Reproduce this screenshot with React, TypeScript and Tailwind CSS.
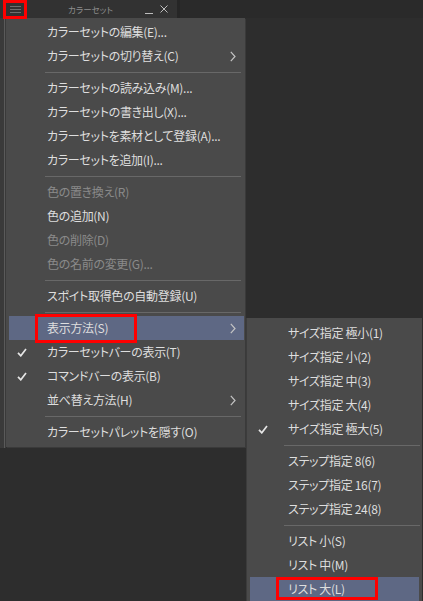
import React from "react";

type Item =
  | { sep: true }
  | {
      sep?: false;
      label: string;
      disabled?: boolean;
      checked?: boolean;
      sub?: boolean;
      active?: boolean;
    };

const mainItems: Item[] = [
  { label: "カラーセットの編集(E)..." },
  { label: "カラーセットの切り替え(C)", sub: true },
  { sep: true },
  { label: "カラーセットの読み込み(M)..." },
  { label: "カラーセットの書き出し(X)..." },
  { label: "カラーセットを素材として登録(A)..." },
  { label: "カラーセットを追加(I)..." },
  { sep: true },
  { label: "色の置き換え(R)", disabled: true },
  { label: "色の追加(N)" },
  { label: "色の削除(D)", disabled: true },
  { label: "色の名前の変更(G)...", disabled: true },
  { sep: true },
  { label: "スポイト取得色の自動登録(U)" },
  { sep: true },
  { label: "表示方法(S)", sub: true, active: true },
  { label: "カラーセットバーの表示(T)", checked: true },
  { label: "コマンドバーの表示(B)", checked: true },
  { label: "並べ替え方法(H)", sub: true },
  { sep: true },
  { label: "カラーセットパレットを隠す(O)" },
];

const subItems: Item[] = [
  { label: "サイズ指定 極小(1)" },
  { label: "サイズ指定 小(2)" },
  { label: "サイズ指定 中(3)" },
  { label: "サイズ指定 大(4)" },
  { label: "サイズ指定 極大(5)", checked: true },
  { sep: true },
  { label: "ステップ指定 8(6)" },
  { label: "ステップ指定 16(7)" },
  { label: "ステップ指定 24(8)" },
  { sep: true },
  { label: "リスト 小(S)" },
  { label: "リスト 中(M)" },
  { label: "リスト 大(L)", active: true },
];

function Check() {
  return (
    <svg width="10" height="9" viewBox="0 0 10 9" className="shrink-0">
      <path d="M1 4.8 L3.8 7.8 L9 1" fill="none" stroke="#e6e6e6" strokeWidth="1.7" />
    </svg>
  );
}

function Chevron() {
  return (
    <svg width="6" height="11" viewBox="0 0 6 11" className="shrink-0">
      <polyline points="0.8,0.8 5,5.5 0.8,10.2" fill="none" stroke="#c4c4c4" strokeWidth="1.2" />
    </svg>
  );
}

function MenuList({
  items,
  sepClass,
  rowClass,
}: {
  items: Item[];
  sepClass: string;
  rowClass: string;
}) {
  return (
    <>
      {items.map((it, i) =>
        it.sep ? (
          <div key={i} className={`h-[8px] flex items-center ${sepClass}`}>
            <div className="h-px w-full bg-[#686868]" />
          </div>
        ) : (
          <div
            key={i}
            className={`h-[24px] flex items-center ${rowClass} ${
              it.active ? "bg-[#5e6884]" : ""
            }`}
          >
            <div className="w-[38px] pl-[8px] shrink-0 flex items-center">
              {it.checked ? <Check /> : null}
            </div>
            <span
              className={`flex-1 whitespace-nowrap text-[12px] leading-none tracking-[-0.3px] [font-feature-settings:'palt'] ${
                it.disabled ? "text-[#8a8a8a]" : "text-[#dedede]"
              }`}
            >
              {it.label}
            </span>
            <div className="w-[14px] shrink-0 flex items-center">
              {it.sub ? <Chevron /> : null}
            </div>
          </div>
        )
      )}
    </>
  );
}

export default function App() {
  return (
    <div className="relative w-[423px] h-[601px] overflow-hidden bg-[#2d2d2d] font-['Noto_Sans_CJK_JP','Noto_Sans',sans-serif]">
      {/* Header */}
      <div className="flex h-[18px]">
        <div className="w-[177px] bg-[#323232] flex items-center">
          <div className="w-[30px] flex flex-col items-center gap-[2px] pl-[1px]">
            <div className="h-px w-[11px] bg-[#6e6e6e]" />
            <div className="h-px w-[11px] bg-[#6e6e6e]" />
            <div className="h-px w-[11px] bg-[#6e6e6e]" />
          </div>
          <div className="flex-1 flex justify-center pl-[6px]">
            <span className="text-[8.5px] leading-none text-[#8e8e8e] [font-feature-settings:'palt']">
              カラーセット
            </span>
          </div>
          <div className="flex items-center gap-[7px] pr-[9px]">
            <div className="h-px w-[8px] bg-[#bdbdbd] mt-[8px]" />
            <svg width="8" height="8" viewBox="0 0 8 8">
              <path d="M0.5 0.5 L7.5 7.5 M7.5 0.5 L0.5 7.5" stroke="#bdbdbd" strokeWidth="1" />
            </svg>
          </div>
        </div>
        <div className="w-[3px] bg-[#262626]" />
        <div className="flex-1 bg-[#2a2a2a]" />
      </div>

      {/* underlying panel strip */}
      <div className="flex h-[430px]">
        <div className="w-[6px] bg-[#3a3a3a] flex">
          <div className="w-[4px]" />
          <div className="w-px bg-[#5a5a5a]" />
        </div>
      </div>

      {/* Main menu */}
      <div className="absolute left-[6px] top-[18px] w-[239px] bg-[#4a4a4a] pt-[2px] pb-[3px] shadow-[1px_1px_0_#3a3a3a]">
        <MenuList items={mainItems} sepClass="pl-[39px] pr-[4px]" rowClass="ml-[3px] mr-[1px]" />
      </div>

      {/* Sub menu */}
      <div className="absolute left-[246px] top-[318px] w-[176px] bg-[#4a4a4a] pt-[3px] border-l border-[#3c3c3c]">
        <MenuList items={subItems} sepClass="pl-[37px] pr-[2px]" rowClass="ml-[3px] mr-[3px]" />
      </div>

      {/* annotation boxes */}
      <div className="absolute left-[3px] top-0 w-[24px] h-[19px] border-[3px] border-[#ff0000]" />
      <div className="absolute left-[35px] top-[314px] w-[102px] h-[29px] border-[3px] border-[#ff0000]" />
      <div className="absolute left-[276px] top-[577px] w-[102px] h-[23px] border-[3px] border-[#ff0000]" />
    </div>
  );
}
